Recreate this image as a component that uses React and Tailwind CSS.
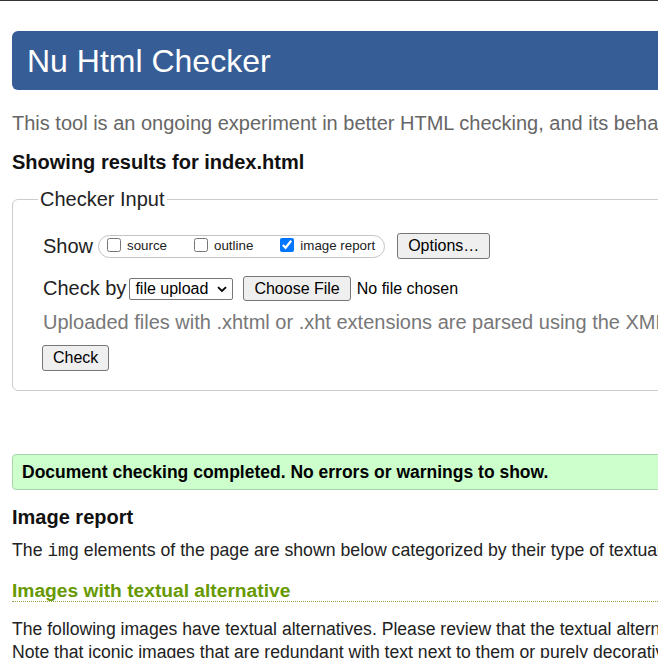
import React from "react";

function Checkbox({ checked, label }) {
  return (
    <label className="flex items-center">
      <input
        type="checkbox"
        defaultChecked={checked}
        className="w-[14px] h-[14px] mb-[3px] accent-[#0075ff]"
      />
      <span className="ml-[6px] text-[13.33px] leading-[16px] text-[#222]">{label}</span>
    </label>
  );
}

function Btn({ children, className = "" }) {
  return (
    <button
      type="button"
      className={
        "bg-[#efefef] border border-[#767676] rounded-[3px] px-[10px] text-[16px] leading-[18px] text-black " +
        className
      }
    >
      {children}
    </button>
  );
}

export default function App() {
  return (
    <div className="w-[658px] h-[658px] overflow-hidden bg-white border-t border-[#333] font-['Liberation_Sans',Arial,sans-serif] text-[#222]">
      <div className="w-[1000px] px-[12px]">
        <div className="mt-[30px] h-[59px] flex items-center pl-[15px] rounded-[6px] bg-[#365d95] text-white text-[32px] leading-[36px]">
          Nu Html Checker
        </div>

        <p className="mt-[22px] text-[20px] leading-[23px] text-[#666] whitespace-nowrap">
          This tool is an ongoing experiment in better HTML checking, and its behavior remains subject to change
        </p>

        <p className="mt-[16px] text-[20px] leading-[23px] font-bold text-[#111] whitespace-nowrap">
          Showing results for index.html
        </p>

        <fieldset className="mt-[14px] border border-[#ccc] rounded-[6px] pl-[30px] pb-[19px]">
          <legend className="-ml-[5px] px-[2px] text-[20px] leading-[23px] text-[#222]">Checker Input</legend>

          <div className="mt-[22px] h-[26px] flex items-center">
            <span className="text-[20px] leading-[23px]">Show</span>
            <div className="ml-[5px] h-[23px] flex items-center gap-[27px] pl-[8px] pr-[9px] border border-[#c4c4c4] rounded-full">
              <Checkbox label="source" />
              <Checkbox label="outline" />
              <Checkbox label="image report" checked />
            </div>
            <Btn className="ml-[12px] h-[26px]">Options…</Btn>
          </div>

          <div className="mt-[17px] h-[25px] flex items-center">
            <span className="text-[20px] leading-[23px]">Check by</span>
            <div className="ml-[3px] h-[22px] w-[104px] flex items-center justify-between pl-[5px] pr-[5px] border border-[#767676] rounded-[2px] text-[16px] leading-[18px] text-black">
              <span>file upload</span>
              <svg width="10" height="7" viewBox="0 0 10 7" className="mt-[1px]">
                <path d="M1 1.2 L5 5 L9 1.2" fill="none" stroke="#000" strokeWidth="1.8" />
              </svg>
            </div>
            <Btn className="ml-[10px] h-[25px]">Choose File</Btn>
            <span className="ml-[6px] text-[16px] leading-[18px] text-black">No file chosen</span>
          </div>

          <p className="mt-[10px] text-[20px] leading-[23px] text-[#777] whitespace-nowrap">
            Uploaded files with .xhtml or .xht extensions are parsed using the XML parser.
          </p>

          <div className="mt-[11px] -ml-[1px]">
            <Btn className="h-[26px] px-[9px]">Check</Btn>
          </div>
        </fieldset>

        <div className="mt-[63px] h-[36px] flex items-center pl-[9px] bg-[#ccffcc] border border-[#a9d3a9] rounded-[4px]">
          <span className="text-[17.5px] leading-[20px] font-bold text-black whitespace-nowrap">
            Document checking completed. No errors or warnings to show.
          </span>
        </div>

        <h2 className="mt-[16px] text-[20px] leading-[23px] font-bold text-[#111]">Image report</h2>

        <p className="mt-[10px] text-[17.7px] leading-[23px] whitespace-nowrap">
          The <code className="font-['Liberation_Mono','Courier_New',monospace] text-[17.5px]">img</code> elements of the page are shown below categorized by their type of textual alternative.
        </p>

        <h3 className="mt-[17px] text-[19.2px] leading-[21px] font-bold text-[#669900] border-b border-dotted border-[#99a040] whitespace-nowrap">
          Images with textual alternative
        </h3>

        <p className="mt-[16px] text-[17.6px] leading-[23px] whitespace-nowrap">
          The following images have textual alternatives. Please review that the textual alternatives are appropriate.
          <br />
          Note that iconic images that are redundant with text next to them or purely decorative images should have empty textual alternatives.
        </p>
      </div>
    </div>
  );
}
